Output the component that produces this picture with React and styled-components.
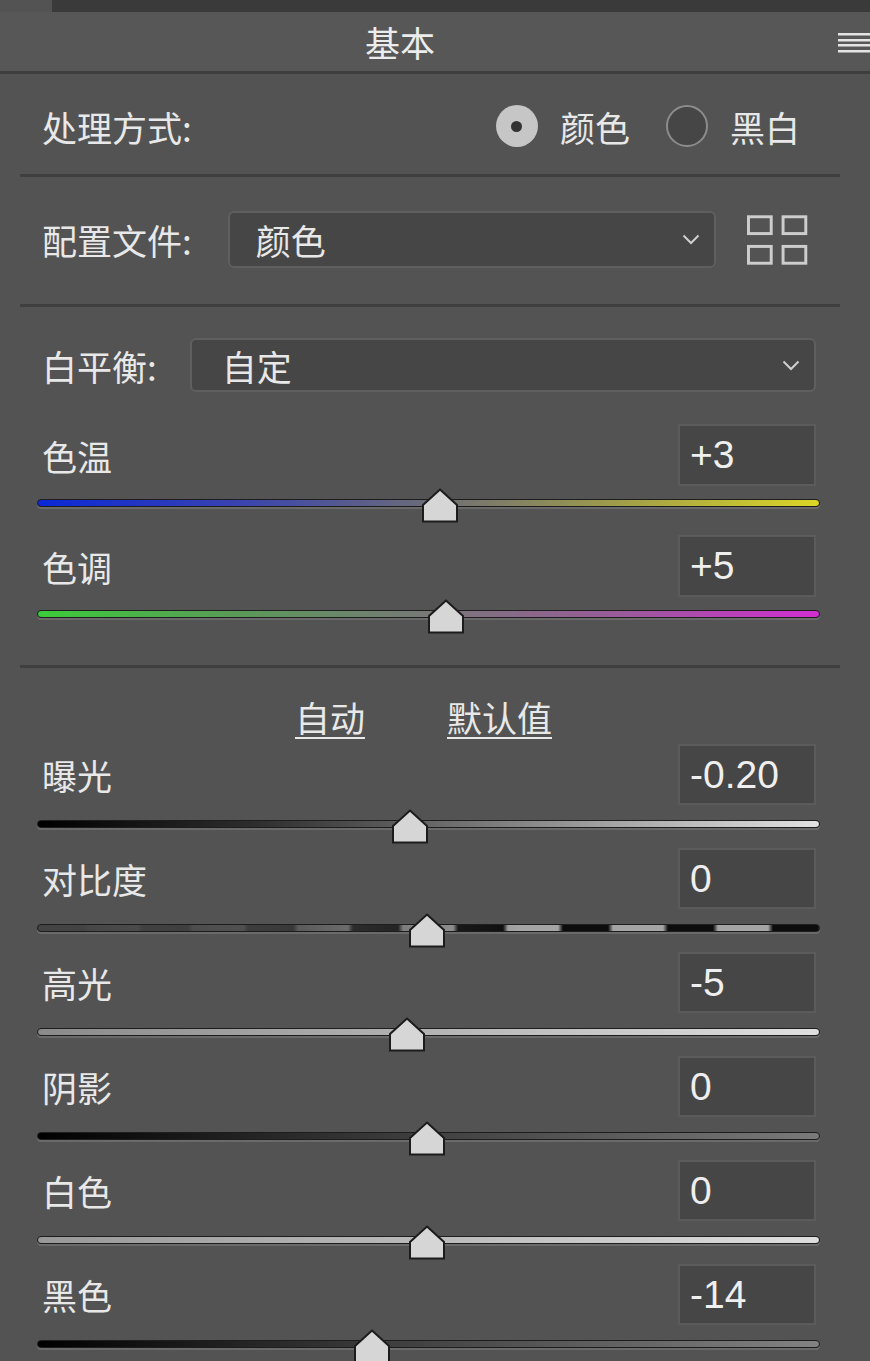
import styled, { createGlobalStyle } from 'styled-components';

const GlobalStyle = createGlobalStyle`
  html, body {
    margin: 0;
    padding: 0;
    background: #535353;
  }
  body {
    font-family: "Noto Sans CJK SC", sans-serif;
    color: #e8e8e8;
    overflow: hidden;
  }
`;

const Page = styled.div`
  width: 870px;
  height: 1361px;
  overflow: hidden;
  background: #535353;
`;

const TopStrip = styled.div`
  height: 12px;
  margin-left: 52px;
  background: #3a3a3a;
`;

const Header = styled.div`
  height: 59px;
  display: flex;
  align-items: center;
  background: #575757;
  border-bottom: 3px solid #3e3e3e;
`;

const HeaderTitle = styled.div`
  flex: 1;
  text-align: center;
  padding-right: 38px;
  font-size: 35px;
  line-height: 1;
  color: #ececec;
`;

const MenuIcon = styled.svg`
  width: 32px;
  height: 24px;
  flex: none;
`;

const Body = styled.div`
  padding: 0 30px 0 20px;
`;

const Divider = styled.div`
  height: 3px;
  background: #3f3f3f;
`;

const Row = styled.div`
  display: flex;
  align-items: center;
  padding: ${p => p.$pad || '0'};
  padding-left: 22px;
  padding-right: ${p => p.$right || '24px'};
`;

const Label = styled.span`
  font-size: 35px;
  line-height: 1;
  color: #e8e8e8;
  white-space: nowrap;
  margin-right: ${p => p.$gap || '0'};
`;

const RadioGroup = styled.div`
  margin-left: auto;
  display: flex;
  align-items: center;
`;

const Radio = styled.span`
  width: 42px;
  height: 42px;
  border-radius: 50%;
  box-sizing: border-box;
  display: flex;
  align-items: center;
  justify-content: center;
  margin-right: 22px;
  background: ${p => (p.$checked ? '#c6c6c6' : '#464646')};
  border: ${p => (p.$checked ? 'none' : '2px solid #8c8c8c')};

  &::after {
    content: '';
    display: ${p => (p.$checked ? 'block' : 'none')};
    width: 11px;
    height: 11px;
    border-radius: 50%;
    background: #333;
  }
`;

const RadioText = styled.span`
  font-size: 35px;
  line-height: 1;
  margin-right: ${p => p.$gap || '0'};
`;

const Select = styled.div`
  flex: ${p => (p.$grow ? 1 : 'none')};
  width: ${p => p.$width || 'auto'};
  height: ${p => p.$height};
  box-sizing: border-box;
  display: flex;
  align-items: center;
  padding: 0 14px 0 ${p => p.$indent || '26px'};
  background: #464646;
  border: 2px solid #5f5f5f;
  border-radius: 6px;
`;

const SelectText = styled.span`
  flex: 1;
  font-size: 35px;
  line-height: 1;
`;

const Chevron = styled.svg`
  width: 18px;
  height: 11px;
`;

const GridIcon = styled.svg`
  width: 62px;
  height: 54px;
  margin-left: 31px;
  margin-right: 8px;
`;

const SliderBlock = styled.div`
  margin-top: ${p => p.$top || '0'};
`;

const SliderHead = styled.div`
  display: flex;
  align-items: center;
  justify-content: space-between;
  padding: 0 24px 0 22px;
`;

const ValueBox = styled.div`
  width: 138px;
  height: ${p => p.$height};
  box-sizing: border-box;
  display: flex;
  align-items: center;
  padding-left: 10px;
  background: #464646;
  border: 2px solid #5b5b5b;
  font-family: "Liberation Sans", "Noto Sans CJK SC", sans-serif;
  font-size: 39px;
  color: #efefef;
`;

const Track = styled.div`
  position: relative;
  height: 6px;
  margin: ${p => p.$margin} 20px ${p => p.$after} 17px;
  border: 1px solid #1d1d1d;
  border-radius: 4px;
  background: ${p => p.$bg};
  box-shadow: 0 2px 0 rgba(125, 125, 125, 0.55);
`;

const Thumb = styled.svg`
  position: absolute;
  top: -12px;
  width: 38px;
  height: 35px;
`;

const LinkRow = styled.div`
  display: flex;
  justify-content: center;
  gap: 82px;
  padding: 31px 13px 0 0;
  height: 45px;
`;

const Link = styled.span`
  font-size: 35px;
  line-height: 1;
  text-decoration: underline;
  text-underline-offset: 5px;
  text-decoration-thickness: 2px;
`;

const contrastBg = `linear-gradient(to right, rgba(68,68,68,1) 0%, rgba(68,68,68,0.85) 30%, rgba(68,68,68,0) 62%),
  repeating-linear-gradient(to right, #0c0c0c 0 45px, #a4a4a4 50px 100px, #0c0c0c 105px)`;

const colorSliders = [
  { label: '色温', value: '+3', pct: 0.515, bg: 'linear-gradient(to right, #0a28d8 0%, #3842b0 25%, #6c6c78 50%, #9a984e 72%, #dcd626 100%)' },
  { label: '色调', value: '+5', pct: 0.522, bg: 'linear-gradient(to right, #3ccc3a 0%, #5a9a58 25%, #787878 50%, #9a5a9a 75%, #d22ed2 100%)' },
];

const toneSliders = [
  { label: '曝光', value: '-0.20', pct: 0.476, bg: 'linear-gradient(to right, #000 0%, #2e2e2e 28%, #666 50%, #a8a8a8 75%, #e2e2e2 100%)' },
  { label: '对比度', value: '0', pct: 0.498, bg: contrastBg },
  { label: '高光', value: '-5', pct: 0.473, bg: 'linear-gradient(to right, #8a8a8a 0%, #b4b4b4 50%, #e0e0e0 100%)' },
  { label: '阴影', value: '0', pct: 0.498, bg: 'linear-gradient(to right, #000 0%, #3a3a3a 45%, #7a7a7a 100%)' },
  { label: '白色', value: '0', pct: 0.498, bg: 'linear-gradient(to right, #989898 0%, #bababa 50%, #dedede 100%)' },
  { label: '黑色', value: '-14', pct: 0.428, bg: 'linear-gradient(to right, #000 0%, #444 50%, #828282 100%)' },
];

const ThumbShape = ({ pct }) => (
  <Thumb viewBox="0 0 38 35" style={{ left: `calc(${pct * 100}% - 19px)` }}>
    <polygon points="19,1.5 36,17 36,33.5 2,33.5 2,17" fill="#d6d6d6" stroke="#1c1c1c" strokeWidth="2" strokeLinejoin="miter" />
  </Thumb>
);

const Slider = ({ label, value, pct, bg, boxHeight, gap, after, top }) => (
  <SliderBlock $top={top}>
    <SliderHead>
      <Label>{label}</Label>
      <ValueBox $height={boxHeight}>{value}</ValueBox>
    </SliderHead>
    <Track $bg={bg} $margin={gap} $after={after}>
      <ThumbShape pct={pct} />
    </Track>
  </SliderBlock>
);

const ChevronDown = () => (
  <Chevron viewBox="0 0 18 11">
    <polyline points="1.5,1.5 9,9 16.5,1.5" fill="none" stroke="#cfcfcf" strokeWidth="2" />
  </Chevron>
);

export default function App() {
  return (
    <Page>
      <GlobalStyle />
      <TopStrip />
      <Header>
        <HeaderTitle>基本</HeaderTitle>
        <MenuIcon viewBox="0 0 32 24">
          <rect x="0" y="3" width="32" height="2.5" fill="#e4e4e4" />
          <rect x="0" y="9" width="32" height="2.5" fill="#e4e4e4" />
          <rect x="0" y="14" width="32" height="2.5" fill="#e4e4e4" />
          <rect x="0" y="20" width="32" height="2.5" fill="#e4e4e4" />
        </MenuIcon>
      </Header>

      <Body>
        <Row $pad="31px 0 27px" $right="40px">
          <Label>处理方式:</Label>
          <RadioGroup>
            <Radio $checked />
            <RadioText $gap="36px">颜色</RadioText>
            <Radio />
            <RadioText>黑白</RadioText>
          </RadioGroup>
        </Row>
        <Divider />

        <Row $pad="34px 0 36px" $right="24px">
          <Label $gap="36px">配置文件:</Label>
          <Select $width="488px" $height="57px">
            <SelectText>颜色</SelectText>
            <ChevronDown />
          </Select>
          <GridIcon viewBox="0 0 62 54">
            <rect x="1.5" y="3.5" width="23" height="17" fill="none" stroke="#cdcdcd" strokeWidth="3" />
            <rect x="36.5" y="3.5" width="23" height="17" fill="none" stroke="#cdcdcd" strokeWidth="3" />
            <rect x="1.5" y="33.5" width="23" height="17" fill="none" stroke="#cdcdcd" strokeWidth="3" />
            <rect x="36.5" y="33.5" width="23" height="17" fill="none" stroke="#cdcdcd" strokeWidth="3" />
          </GridIcon>
        </Row>
        <Divider />

        <Row $pad="31px 0 0" $right="24px">
          <Label $gap="33px">白平衡:</Label>
          <Select $grow $height="54px" $indent="30px">
            <SelectText>自定</SelectText>
            <ChevronDown />
          </Select>
        </Row>

        {colorSliders.map((s, i) => (
          <Slider
            key={s.label}
            {...s}
            top={i === 0 ? '32px' : '0'}
            boxHeight="62px"
            gap="13px"
            after={i === 0 ? '28px' : '47px'}
          />
        ))}
        <Divider />

        <LinkRow>
          <Link>自动</Link>
          <Link>默认值</Link>
        </LinkRow>

        {toneSliders.map(s => (
          <Slider key={s.label} {...s} boxHeight="61px" gap="15px" after="20px" />
        ))}
      </Body>
    </Page>
  );
}
